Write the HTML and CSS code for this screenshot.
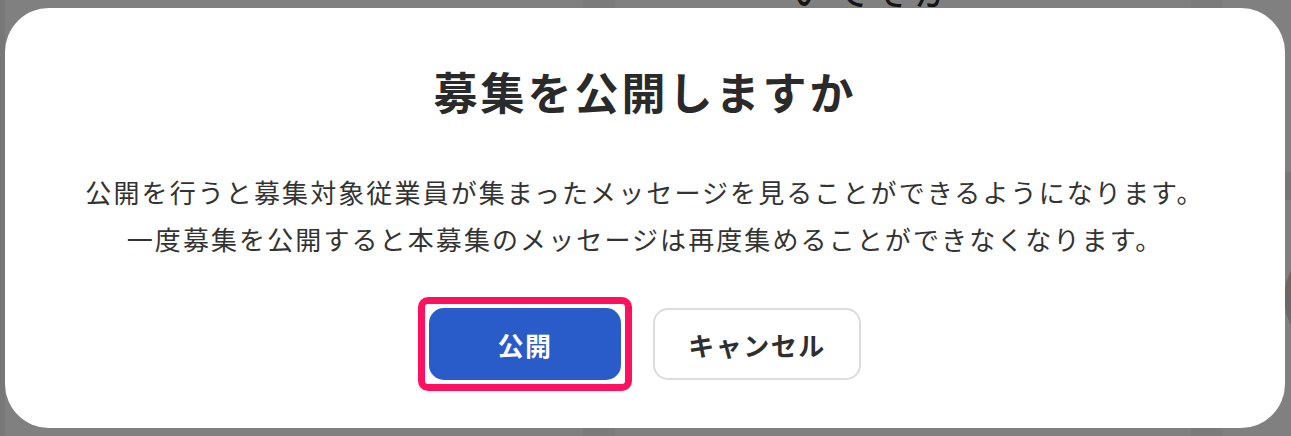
FILE: index.html
```html
<!DOCTYPE html>
<html lang="ja">
<head>
<meta charset="utf-8">
<title>募集を公開しますか</title>
<link rel="stylesheet" href="styles.css">
</head>
<body>
<div class="backdrop">
  <div class="behind-text">いてそか</div>
  <div class="behind-band"></div>
  <div class="behind-avatar"></div>
  <div class="modal" role="dialog" aria-labelledby="modal-title">
    <h1 class="modal-title" id="modal-title">募集を公開しますか</h1>
    <p class="modal-text">公開を行うと募集対象従業員が集まったメッセージを見ることができるようになります。<br>一度募集を公開すると本募集のメッセージは再度集めることができなくなります。</p>
    <div class="modal-actions">
      <span class="highlight">
        <button class="btn btn-primary" type="button">公開</button>
      </span>
      <button class="btn btn-secondary" type="button">キャンセル</button>
    </div>
  </div>
</div>
</body>
</html>
```

FILE: styles.css
```css
html, body {
  margin: 0;
  padding: 0;
  width: 1291px;
  height: 436px;
  overflow: hidden;
}

body {
  font-family: "Noto Sans CJK JP", "Noto Sans", sans-serif;
  background: #808080;
}

.backdrop {
  position: relative;
  width: 1291px;
  height: 436px;
  box-sizing: border-box;
  padding: 8px 6px 8px 5px;
  background:
    linear-gradient(to right,
      #777 0, #777 5px,
      #808080 5px, #808080 583px,
      #7b7b7b 583px, #7b7b7b 615px,
      #808080 615px, #808080 1191px,
      #7b7b7b 1191px, #7b7b7b 1222px,
      #808080 1222px);
}

.behind-text {
  position: absolute;
  left: 790px;
  top: -32px;
  font-size: 40px;
  line-height: 40px;
  color: #151515;
  letter-spacing: 2px;
}

.behind-band {
  position: absolute;
  right: 0;
  top: 172px;
  width: 8px;
  height: 28px;
  background: #767676;
}

.behind-avatar {
  position: absolute;
  left: 1284px;
  top: 256px;
  width: 60px;
  height: 84px;
  border-radius: 50%;
  background: linear-gradient(#6e625a, #6b6b72);
}

.modal {
  position: relative;
  z-index: 1;
  height: 420px;
  box-sizing: border-box;
  background: #fff;
  border-radius: 44px;
  padding: 51px 40px 48px;
  display: flex;
  flex-direction: column;
  align-items: center;
  text-align: center;
}

.modal-title {
  margin: 0;
  font-size: 44px;
  line-height: 64px;
  font-weight: 700;
  letter-spacing: 3px;
  color: #2a2a2a;
}

.modal-text {
  margin: 45px 0 0;
  font-size: 26px;
  line-height: 47px;
  letter-spacing: 2.1px;
  color: #333;
}

.modal-actions {
  margin-top: 46px;
  display: flex;
  gap: 32px;
  align-items: center;
}

.highlight {
  position: relative;
  display: block;
}

.highlight::after {
  content: "";
  position: absolute;
  inset: -11px;
  border: 7px solid #ff1060;
  border-radius: 10px;
  pointer-events: none;
}

.btn {
  font-family: inherit;
  font-size: 26px;
  font-weight: 700;
  letter-spacing: 1.5px;
  height: 72px;
  box-sizing: border-box;
  border-radius: 15px;
  cursor: pointer;
  display: block;
  margin: 0;
  padding: 0;
}

.btn-primary {
  width: 192px;
  background: #295bc9;
  border: none;
  color: #fff;
}

.btn-secondary {
  width: 208px;
  background: #fff;
  border: 2px solid #dcdcdc;
  color: #2f2f2f;
}
```
